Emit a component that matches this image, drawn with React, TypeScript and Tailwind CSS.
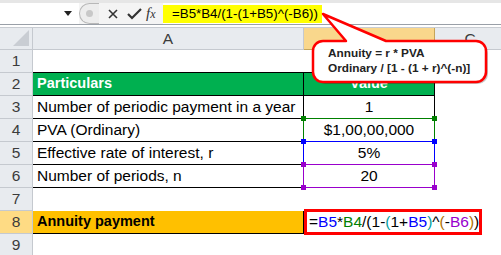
import React from 'react';

const FONT = { fontFamily: '"Liberation Sans", Arial, sans-serif' };

type RowProps = {
  n: number;
  a?: React.ReactNode;
  b?: React.ReactNode;
  kind?: 'plain' | 'table' | 'head' | 'top' | 'result';
  bOverlay?: React.ReactNode;
};

const RowHeader = ({ n, active }: { n: number; active?: boolean }) => (
  <div
    className={`w-[33px] shrink-0 h-full flex items-center justify-center border-r border-b border-[#c5c9cf] text-[15.5px] text-[#3b3b3b] ${
      active ? 'bg-[#fedb84]' : 'bg-[#e8ebef]'
    }`}
  >
    {n}
  </div>
);

const Row = ({ n, a, b, kind = 'plain', bOverlay }: RowProps) => {
  const line = kind === 'table' || kind === 'head' || kind === 'top';
  const aBg = kind === 'head' ? 'bg-[#00b050] text-white font-bold text-[14.5px]' : kind === 'result' ? 'bg-[#ffc000] font-bold text-[14.5px] border-b border-black' : '';
  const bBg = kind === 'head' ? 'bg-[#00b050] text-white font-bold text-[14.5px]' : '';
  return (
    <div className="flex h-[23px]">
      <RowHeader n={n} active={kind === 'result'} />
      <div
        className={`w-[271px] shrink-0 h-full flex items-center pl-[4px] whitespace-nowrap overflow-hidden ${aBg} ${
          line ? 'border-b border-black' : ''
        } ${line && kind !== 'top' ? 'border-r border-black' : ''} ${kind === 'result' ? 'border-r border-black' : ''}`}
      >
        {a}
      </div>
      <div
        className={`relative w-[131px] shrink-0 h-full flex items-center justify-center whitespace-nowrap ${bBg} ${
          line ? 'border-b border-black' : ''
        } ${line && kind !== 'top' ? 'border-r border-black' : ''}`}
      >
        {b}
        {bOverlay}
      </div>
      <div className="flex-1" />
    </div>
  );
};

const RefBox = ({ color }: { color: string }) => (
  <div className="absolute left-[-1px] top-[-1px] w-[132px] h-[24px] border pointer-events-none" style={{ borderColor: color }}>
    <div className="absolute left-[-3px] top-[-3px] w-[5px] h-[5px]" style={{ background: color }} />
    <div className="absolute right-[-3px] top-[-3px] w-[5px] h-[5px]" style={{ background: color }} />
    <div className="absolute left-[-3px] bottom-[-3px] w-[5px] h-[5px]" style={{ background: color }} />
    <div className="absolute right-[-3px] bottom-[-3px] w-[5px] h-[5px]" style={{ background: color }} />
  </div>
);

const Formula = () => (
  <span>
    =<span className="text-[#0000ff]">B5</span>*<span className="text-[#008000]">B4</span>/(1-
    <span className="text-[#00a0a0]">(</span>1+<span className="text-[#0000ff]">B5</span>
    <span className="text-[#00a0a0]">)</span>^<span className="text-[#b07000]">(</span>-
    <span className="text-[#9900cc]">B6</span>
    <span className="text-[#b07000]">)</span>)
  </span>
);

const CALLOUT =
  'M325 41 L346 41 L323 14 L386 41 L476 41 A10 10 0 0 1 486 51 L486 72 A10 10 0 0 1 476 82 L323 82 A10 10 0 0 1 313 72 L313 51 A10 10 0 0 1 323 41 Z';

export default function App() {
  return (
    <div className="relative w-[501px] h-[255px] bg-white overflow-hidden text-black" style={FONT}>
      {/* formula bar */}
      <div className="flex h-[25px] border-t-[3px] border-t-[#e6e6e6] border-b border-b-[#9aa0a8]">
        <div className="w-[79px] shrink-0 bg-white flex items-center justify-end pr-[7px]">
          <svg width="8" height="5" viewBox="0 0 8 5">
            <path d="M0 0h8L4 5z" fill="#222" />
          </svg>
        </div>
        <div className="w-[84px] shrink-0 flex items-center bg-[#f4f4f4]">
          <div className="w-[20px] h-[21px] rounded-l-full border border-r-0 border-[#b8b8b8] bg-[#ededed] flex items-center justify-center">
            <div className="w-[7px] h-[7px] rounded-full bg-[#c8c8c8]" />
          </div>
          <svg width="22" height="20" viewBox="0 0 22 20" className="ml-[4px]">
            <path d="M6 6l8 8M14 6l-8 8" stroke="#333" strokeWidth="1.6" />
          </svg>
          <svg width="18" height="20" viewBox="0 0 18 20">
            <path d="M3 10l4 4 9-9" stroke="#333" strokeWidth="2.2" fill="none" />
          </svg>
          <span className="ml-[3px] italic text-[15px] text-[#333]" style={{ fontFamily: '"Liberation Serif", serif' }}>
            f<span className="text-[12px]">x</span>
          </span>
        </div>
        <div className="flex-1 bg-white flex items-center">
          <div className="h-[18px] bg-[#ffff00] flex items-center pl-[9px] pr-[4px] text-[13.3px] whitespace-nowrap">
            =B5*B4/(1-(1+B5)^(-B6))
          </div>
        </div>
      </div>
      <div className="h-[3px] border-b border-[#c8ccd2]" />
      {/* column headers */}
      <div className="flex h-[22px] text-[15.5px] text-[#3b3b3b]">
        <div className="w-[33px] shrink-0 bg-[#e8ebef] border-r border-b border-[#c5c9cf] flex items-end justify-end p-[3px]">
          <svg width="16" height="16" viewBox="0 0 16 16">
            <path d="M16 0V16H0z" fill="#c9cdd3" />
          </svg>
        </div>
        <div className="w-[271px] shrink-0 bg-[#e8ebef] border-r border-b border-[#c5c9cf] flex items-center justify-center">A</div>
        <div className="w-[131px] shrink-0 bg-[#f9d78c] border-r border-b border-[#c5a55a]" />
        <div className="flex-1 bg-[#e8ebef] border-b border-[#c5c9cf] flex items-center justify-center pl-[4px]">C</div>
      </div>
      {/* rows */}
      <div className="text-[15.5px]">
        <Row n={1} kind="top" />
        <Row n={2} kind="head" a="Particulars" b="Value" />
        <Row n={3} kind="table" a="Number of periodic payment in a year" b="1" />
        <Row n={4} kind="table" a="PVA (Ordinary)" b="$1,00,00,000" bOverlay={<RefBox color="#008000" />} />
        <Row n={5} kind="table" a="Effective rate of interest, r" b="5%" bOverlay={<RefBox color="#0000ff" />} />
        <Row n={6} kind="table" a="Number of periods, n" b="20" bOverlay={<RefBox color="#9900cc" />} />
        <Row n={7} />
        <Row
          n={8}
          kind="result"
          a="Annuity payment"
          bOverlay={
            <div className="absolute left-0 top-[-2px] w-[178px] h-[26px] border-[3px] border-[#ff0000] bg-white flex items-center pl-[2px] whitespace-nowrap">
              <Formula />
            </div>
          }
        />
        <Row n={9} />
      </div>
      {/* callout */}
      <svg className="absolute left-0 top-0 pointer-events-none" width="501" height="255" viewBox="0 0 501 255">
        <path d={CALLOUT} fill="#000" opacity="0.22" transform="translate(2 2)" />
        <path d={CALLOUT} fill="#fff" stroke="#ff0000" strokeWidth="2.5" strokeLinejoin="round" />
      </svg>
      <div className="absolute left-[328px] top-[46px] text-[11.8px] font-bold leading-[15px] text-[#222]">
        <div>Annuity = r * PVA</div>
        <div>Ordinary / [1 - (1 + r)^(-n)]</div>
      </div>
    </div>
  );
}
